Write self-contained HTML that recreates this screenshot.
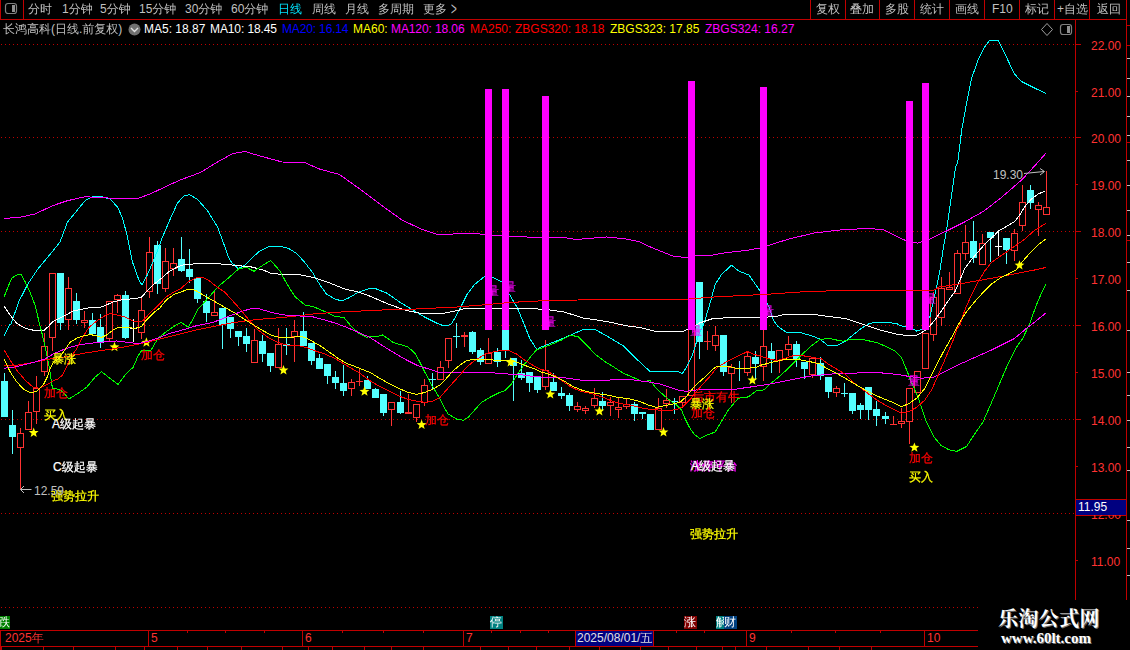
<!DOCTYPE html>
<html><head><meta charset="utf-8"><title>chart</title>
<style>
html,body{margin:0;padding:0;background:#000}
body{width:1130px;height:650px;overflow:hidden;position:relative;font-family:"Liberation Sans","WenQuanYi Zen Hei","Noto Sans CJK SC",sans-serif}
svg{position:absolute;left:0;top:0}
.t{position:absolute;white-space:nowrap;font-size:12px;line-height:13px}
.b{-webkit-text-stroke:0.25px currentColor}
</style></head><body>
<svg width="1130" height="650" viewBox="0 0 1130 650" shape-rendering="crispEdges">
<line x1="1" y1="44.5" x2="1075" y2="44.5" stroke="#c00000" stroke-dasharray="1 3"/>
<line x1="1" y1="137.5" x2="1075" y2="137.5" stroke="#c00000" stroke-dasharray="1 3"/>
<line x1="1" y1="231.5" x2="1075" y2="231.5" stroke="#c00000" stroke-dasharray="1 3"/>
<line x1="1" y1="325.5" x2="1075" y2="325.5" stroke="#c00000" stroke-dasharray="1 3"/>
<line x1="1" y1="419.5" x2="1075" y2="419.5" stroke="#c00000" stroke-dasharray="1 3"/>
<line x1="1" y1="513.5" x2="1075" y2="513.5" stroke="#c00000" stroke-dasharray="1 3"/>
<line x1="1" y1="607.5" x2="978" y2="607.5" stroke="#c00000" stroke-dasharray="1 3"/>
<rect x="4" y="373" width="1" height="8" fill="#54ffff"/>
<rect x="1" y="381" width="7" height="36" fill="#54ffff"/>
<rect x="12" y="410" width="1" height="15" fill="#54ffff"/>
<rect x="12" y="437" width="1" height="17" fill="#54ffff"/>
<rect x="9" y="425" width="7" height="12" fill="#54ffff"/>
<rect x="20" y="428" width="1" height="5" fill="#ff3232"/>
<rect x="20" y="448" width="1" height="41" fill="#ff3232"/>
<rect x="17.5" y="433.5" width="6" height="14" fill="#000" stroke="#ff3232"/>
<rect x="28" y="401" width="1" height="11" fill="#ff3232"/>
<rect x="25.5" y="412.5" width="6" height="17" fill="#000" stroke="#ff3232"/>
<rect x="36" y="376" width="1" height="12" fill="#ff3232"/>
<rect x="36" y="412" width="1" height="12" fill="#ff3232"/>
<rect x="33.5" y="388.5" width="6" height="23" fill="#000" stroke="#ff3232"/>
<rect x="44" y="333" width="1" height="13" fill="#ff3232"/>
<rect x="44" y="372" width="1" height="4" fill="#ff3232"/>
<rect x="41.5" y="346.5" width="6" height="25" fill="#000" stroke="#ff3232"/>
<rect x="52" y="338" width="1" height="13" fill="#ff3232"/>
<rect x="49.5" y="273.5" width="6" height="64" fill="#000" stroke="#ff3232"/>
<rect x="60" y="323" width="1" height="7" fill="#54ffff"/>
<rect x="57" y="273" width="7" height="50" fill="#54ffff"/>
<rect x="68" y="277" width="1" height="11" fill="#ff3232"/>
<rect x="68" y="320" width="1" height="10" fill="#ff3232"/>
<rect x="65.5" y="288.5" width="6" height="31" fill="#000" stroke="#ff3232"/>
<rect x="76" y="293" width="1" height="8" fill="#54ffff"/>
<rect x="76" y="320" width="1" height="4" fill="#54ffff"/>
<rect x="73" y="301" width="7" height="19" fill="#54ffff"/>
<rect x="84" y="311" width="1" height="9" fill="#ff3232"/>
<rect x="84" y="323" width="1" height="5" fill="#ff3232"/>
<rect x="81.5" y="320.5" width="6" height="2" fill="#000" stroke="#ff3232"/>
<rect x="92" y="313" width="1" height="7" fill="#54ffff"/>
<rect x="89" y="320" width="7" height="14" fill="#54ffff"/>
<rect x="100" y="314" width="1" height="13" fill="#54ffff"/>
<rect x="100" y="343" width="1" height="5" fill="#54ffff"/>
<rect x="97" y="327" width="7" height="16" fill="#54ffff"/>
<rect x="109" y="339" width="1" height="3" fill="#ff3232"/>
<rect x="106.5" y="301.5" width="6" height="37" fill="#000" stroke="#ff3232"/>
<rect x="117" y="294" width="1" height="1" fill="#ff3232"/>
<rect x="117" y="300" width="1" height="13" fill="#ff3232"/>
<rect x="114.5" y="295.5" width="6" height="4" fill="#000" stroke="#ff3232"/>
<rect x="125" y="291" width="1" height="4" fill="#54ffff"/>
<rect x="125" y="338" width="1" height="1" fill="#54ffff"/>
<rect x="122" y="295" width="7" height="43" fill="#54ffff"/>
<rect x="133" y="319" width="1" height="23" fill="#ffffff"/>
<rect x="130" y="328" width="7" height="1" fill="#ffffff"/>
<rect x="141" y="297" width="1" height="13" fill="#ff3232"/>
<rect x="141" y="333" width="1" height="6" fill="#ff3232"/>
<rect x="138.5" y="310.5" width="6" height="22" fill="#000" stroke="#ff3232"/>
<rect x="149" y="237" width="1" height="15" fill="#ff3232"/>
<rect x="149" y="292" width="1" height="6" fill="#ff3232"/>
<rect x="146.5" y="252.5" width="6" height="39" fill="#000" stroke="#ff3232"/>
<rect x="157" y="241" width="1" height="4" fill="#54ffff"/>
<rect x="157" y="284" width="1" height="10" fill="#54ffff"/>
<rect x="154" y="245" width="7" height="39" fill="#54ffff"/>
<rect x="165" y="248" width="1" height="13" fill="#ff3232"/>
<rect x="165" y="289" width="1" height="3" fill="#ff3232"/>
<rect x="162.5" y="261.5" width="6" height="27" fill="#000" stroke="#ff3232"/>
<rect x="173" y="248" width="1" height="15" fill="#ff3232"/>
<rect x="173" y="269" width="1" height="7" fill="#ff3232"/>
<rect x="170.5" y="263.5" width="6" height="5" fill="#000" stroke="#ff3232"/>
<rect x="181" y="237" width="1" height="22" fill="#54ffff"/>
<rect x="181" y="271" width="1" height="1" fill="#54ffff"/>
<rect x="178" y="259" width="7" height="12" fill="#54ffff"/>
<rect x="189" y="249" width="1" height="20" fill="#54ffff"/>
<rect x="189" y="277" width="1" height="6" fill="#54ffff"/>
<rect x="186" y="269" width="7" height="8" fill="#54ffff"/>
<rect x="197" y="299" width="1" height="4" fill="#54ffff"/>
<rect x="194" y="278" width="7" height="21" fill="#54ffff"/>
<rect x="206" y="294" width="1" height="7" fill="#54ffff"/>
<rect x="206" y="313" width="1" height="9" fill="#54ffff"/>
<rect x="203" y="301" width="7" height="12" fill="#54ffff"/>
<rect x="214" y="292" width="1" height="20" fill="#ff3232"/>
<rect x="211.5" y="312.5" width="6" height="3" fill="#000" stroke="#ff3232"/>
<rect x="222" y="325" width="1" height="24" fill="#54ffff"/>
<rect x="219" y="308" width="7" height="17" fill="#54ffff"/>
<rect x="230" y="329" width="1" height="9" fill="#54ffff"/>
<rect x="227" y="317" width="7" height="12" fill="#54ffff"/>
<rect x="238" y="337" width="1" height="9" fill="#54ffff"/>
<rect x="235" y="331" width="7" height="6" fill="#54ffff"/>
<rect x="246" y="328" width="1" height="8" fill="#54ffff"/>
<rect x="246" y="344" width="1" height="8" fill="#54ffff"/>
<rect x="243" y="336" width="7" height="8" fill="#54ffff"/>
<rect x="254" y="329" width="1" height="11" fill="#ff3232"/>
<rect x="251.5" y="340.5" width="6" height="22" fill="#000" stroke="#ff3232"/>
<rect x="262" y="335" width="1" height="6" fill="#54ffff"/>
<rect x="262" y="354" width="1" height="8" fill="#54ffff"/>
<rect x="259" y="341" width="7" height="13" fill="#54ffff"/>
<rect x="270" y="366" width="1" height="6" fill="#54ffff"/>
<rect x="267" y="353" width="7" height="13" fill="#54ffff"/>
<rect x="278" y="328" width="1" height="16" fill="#ff3232"/>
<rect x="275.5" y="344.5" width="6" height="23" fill="#000" stroke="#ff3232"/>
<rect x="286" y="328" width="1" height="16" fill="#54ffff"/>
<rect x="286" y="346" width="1" height="9" fill="#54ffff"/>
<rect x="283" y="344" width="7" height="2" fill="#54ffff"/>
<rect x="294" y="320" width="1" height="11" fill="#ff3232"/>
<rect x="294" y="337" width="1" height="25" fill="#ff3232"/>
<rect x="291.5" y="331.5" width="6" height="5" fill="#000" stroke="#ff3232"/>
<rect x="303" y="312" width="1" height="19" fill="#54ffff"/>
<rect x="300" y="331" width="7" height="15" fill="#54ffff"/>
<rect x="311" y="361" width="1" height="4" fill="#54ffff"/>
<rect x="308" y="343" width="7" height="18" fill="#54ffff"/>
<rect x="319" y="354" width="1" height="4" fill="#54ffff"/>
<rect x="316" y="358" width="7" height="11" fill="#54ffff"/>
<rect x="327" y="376" width="1" height="8" fill="#54ffff"/>
<rect x="324" y="364" width="7" height="12" fill="#54ffff"/>
<rect x="335" y="371" width="1" height="6" fill="#54ffff"/>
<rect x="335" y="383" width="1" height="6" fill="#54ffff"/>
<rect x="332" y="377" width="7" height="6" fill="#54ffff"/>
<rect x="343" y="365" width="1" height="18" fill="#54ffff"/>
<rect x="343" y="391" width="1" height="5" fill="#54ffff"/>
<rect x="340" y="383" width="7" height="8" fill="#54ffff"/>
<rect x="351" y="379" width="1" height="3" fill="#ff3232"/>
<rect x="351" y="389" width="1" height="7" fill="#ff3232"/>
<rect x="348.5" y="382.5" width="6" height="6" fill="#000" stroke="#ff3232"/>
<rect x="359" y="369" width="1" height="17" fill="#ff3232"/>
<rect x="356" y="381" width="7" height="1" fill="#ff3232"/>
<rect x="367" y="376" width="1" height="4" fill="#54ffff"/>
<rect x="364" y="380" width="7" height="9" fill="#54ffff"/>
<rect x="375" y="388" width="1" height="1" fill="#54ffff"/>
<rect x="372" y="389" width="7" height="9" fill="#54ffff"/>
<rect x="383" y="413" width="1" height="3" fill="#54ffff"/>
<rect x="380" y="394" width="7" height="19" fill="#54ffff"/>
<rect x="391" y="410" width="1" height="16" fill="#ff3232"/>
<rect x="388.5" y="402.5" width="6" height="7" fill="#000" stroke="#ff3232"/>
<rect x="400" y="391" width="1" height="11" fill="#54ffff"/>
<rect x="400" y="413" width="1" height="1" fill="#54ffff"/>
<rect x="397" y="402" width="7" height="11" fill="#54ffff"/>
<rect x="408" y="394" width="1" height="18" fill="#ff3232"/>
<rect x="405.5" y="412.5" width="6" height="1" fill="#000" stroke="#ff3232"/>
<rect x="416" y="418" width="1" height="4" fill="#ff3232"/>
<rect x="413.5" y="404.5" width="6" height="13" fill="#000" stroke="#ff3232"/>
<rect x="424" y="379" width="1" height="6" fill="#ff3232"/>
<rect x="424" y="403" width="1" height="3" fill="#ff3232"/>
<rect x="421.5" y="385.5" width="6" height="17" fill="#000" stroke="#ff3232"/>
<rect x="432" y="373" width="1" height="16" fill="#54ffff"/>
<rect x="429" y="379" width="7" height="1" fill="#54ffff"/>
<rect x="440" y="361" width="1" height="6" fill="#ff3232"/>
<rect x="437.5" y="367.5" width="6" height="12" fill="#000" stroke="#ff3232"/>
<rect x="448" y="361" width="1" height="7" fill="#ff3232"/>
<rect x="445.5" y="338.5" width="6" height="22" fill="#000" stroke="#ff3232"/>
<rect x="456" y="323" width="1" height="25" fill="#54ffff"/>
<rect x="453" y="336" width="7" height="1" fill="#54ffff"/>
<rect x="464" y="332" width="1" height="3" fill="#ff3232"/>
<rect x="464" y="337" width="1" height="10" fill="#ff3232"/>
<rect x="461.5" y="335.5" width="6" height="1" fill="#000" stroke="#ff3232"/>
<rect x="472" y="331" width="1" height="1" fill="#54ffff"/>
<rect x="472" y="352" width="1" height="2" fill="#54ffff"/>
<rect x="469" y="332" width="7" height="20" fill="#54ffff"/>
<rect x="480" y="348" width="1" height="2" fill="#54ffff"/>
<rect x="480" y="362" width="1" height="3" fill="#54ffff"/>
<rect x="477" y="350" width="7" height="12" fill="#54ffff"/>
<rect x="488" y="338" width="1" height="15" fill="#ff3232"/>
<rect x="485.5" y="353.5" width="6" height="10" fill="#000" stroke="#ff3232"/>
<rect x="497" y="348" width="1" height="4" fill="#54ffff"/>
<rect x="497" y="362" width="1" height="5" fill="#54ffff"/>
<rect x="494" y="352" width="7" height="10" fill="#54ffff"/>
<rect x="505" y="350" width="1" height="8" fill="#54ffff"/>
<rect x="502" y="330" width="7" height="20" fill="#54ffff"/>
<rect x="513" y="366" width="1" height="35" fill="#54ffff"/>
<rect x="510" y="358" width="7" height="8" fill="#54ffff"/>
<rect x="521" y="360" width="1" height="13" fill="#54ffff"/>
<rect x="521" y="378" width="1" height="2" fill="#54ffff"/>
<rect x="518" y="373" width="7" height="5" fill="#54ffff"/>
<rect x="529" y="383" width="1" height="9" fill="#54ffff"/>
<rect x="526" y="372" width="7" height="11" fill="#54ffff"/>
<rect x="537" y="390" width="1" height="3" fill="#54ffff"/>
<rect x="534" y="377" width="7" height="13" fill="#54ffff"/>
<rect x="545" y="340" width="1" height="30" fill="#ff3232"/>
<rect x="545" y="387" width="1" height="3" fill="#ff3232"/>
<rect x="542.5" y="370.5" width="6" height="16" fill="#000" stroke="#ff3232"/>
<rect x="553" y="373" width="1" height="9" fill="#54ffff"/>
<rect x="550" y="382" width="7" height="9" fill="#54ffff"/>
<rect x="561" y="387" width="1" height="6" fill="#54ffff"/>
<rect x="561" y="396" width="1" height="3" fill="#54ffff"/>
<rect x="558" y="393" width="7" height="3" fill="#54ffff"/>
<rect x="569" y="393" width="1" height="2" fill="#54ffff"/>
<rect x="569" y="406" width="1" height="5" fill="#54ffff"/>
<rect x="566" y="395" width="7" height="11" fill="#54ffff"/>
<rect x="577" y="402" width="1" height="4" fill="#ff3232"/>
<rect x="577" y="410" width="1" height="2" fill="#ff3232"/>
<rect x="574.5" y="406.5" width="6" height="3" fill="#000" stroke="#ff3232"/>
<rect x="585" y="406" width="1" height="2" fill="#ff3232"/>
<rect x="585" y="411" width="1" height="3" fill="#ff3232"/>
<rect x="582.5" y="408.5" width="6" height="2" fill="#000" stroke="#ff3232"/>
<rect x="594" y="388" width="1" height="10" fill="#ff3232"/>
<rect x="594" y="406" width="1" height="2" fill="#ff3232"/>
<rect x="591.5" y="398.5" width="6" height="7" fill="#000" stroke="#ff3232"/>
<rect x="602" y="392" width="1" height="9" fill="#54ffff"/>
<rect x="602" y="406" width="1" height="5" fill="#54ffff"/>
<rect x="599" y="401" width="7" height="5" fill="#54ffff"/>
<rect x="610" y="397" width="1" height="5" fill="#ff3232"/>
<rect x="610" y="406" width="1" height="10" fill="#ff3232"/>
<rect x="607.5" y="402.5" width="6" height="3" fill="#000" stroke="#ff3232"/>
<rect x="618" y="398" width="1" height="9" fill="#ff3232"/>
<rect x="618" y="410" width="1" height="8" fill="#ff3232"/>
<rect x="615.5" y="407.5" width="6" height="2" fill="#000" stroke="#ff3232"/>
<rect x="626" y="399" width="1" height="5" fill="#ff3232"/>
<rect x="626" y="407" width="1" height="2" fill="#ff3232"/>
<rect x="623.5" y="404.5" width="6" height="2" fill="#000" stroke="#ff3232"/>
<rect x="634" y="402" width="1" height="2" fill="#54ffff"/>
<rect x="634" y="414" width="1" height="7" fill="#54ffff"/>
<rect x="631" y="404" width="7" height="10" fill="#54ffff"/>
<rect x="642" y="414" width="1" height="5" fill="#54ffff"/>
<rect x="639" y="412" width="7" height="2" fill="#54ffff"/>
<rect x="647" y="414" width="7" height="16" fill="#54ffff"/>
<rect x="658" y="398" width="1" height="10" fill="#ff3232"/>
<rect x="655.5" y="408.5" width="6" height="21" fill="#000" stroke="#ff3232"/>
<rect x="666" y="389" width="1" height="11" fill="#ff3232"/>
<rect x="666" y="404" width="1" height="4" fill="#ff3232"/>
<rect x="663.5" y="400.5" width="6" height="3" fill="#000" stroke="#ff3232"/>
<rect x="674" y="398" width="1" height="16" fill="#54ffff"/>
<rect x="671" y="401" width="7" height="1" fill="#54ffff"/>
<rect x="682" y="403" width="1" height="5" fill="#ff3232"/>
<rect x="679.5" y="396.5" width="6" height="6" fill="#000" stroke="#ff3232"/>
<rect x="688.5" y="322.5" width="6" height="73" fill="#000" stroke="#ff3232"/>
<rect x="699" y="342" width="1" height="17" fill="#54ffff"/>
<rect x="696" y="282" width="7" height="60" fill="#54ffff"/>
<rect x="707" y="331" width="1" height="19" fill="#ff3232"/>
<rect x="704" y="341" width="7" height="1" fill="#ff3232"/>
<rect x="715" y="326" width="1" height="9" fill="#ff3232"/>
<rect x="715" y="346" width="1" height="5" fill="#ff3232"/>
<rect x="712.5" y="335.5" width="6" height="10" fill="#000" stroke="#ff3232"/>
<rect x="723" y="372" width="1" height="4" fill="#54ffff"/>
<rect x="720" y="335" width="7" height="37" fill="#54ffff"/>
<rect x="731" y="364" width="1" height="3" fill="#ff3232"/>
<rect x="731" y="374" width="1" height="29" fill="#ff3232"/>
<rect x="728.5" y="367.5" width="6" height="6" fill="#000" stroke="#ff3232"/>
<rect x="739" y="361" width="1" height="20" fill="#54ffff"/>
<rect x="736" y="368" width="7" height="1" fill="#54ffff"/>
<rect x="747" y="351" width="1" height="5" fill="#ff3232"/>
<rect x="747" y="373" width="1" height="3" fill="#ff3232"/>
<rect x="744.5" y="356.5" width="6" height="16" fill="#000" stroke="#ff3232"/>
<rect x="755" y="351" width="1" height="6" fill="#54ffff"/>
<rect x="755" y="364" width="1" height="16" fill="#54ffff"/>
<rect x="752" y="357" width="7" height="7" fill="#54ffff"/>
<rect x="763" y="330" width="1" height="16" fill="#ff3232"/>
<rect x="763" y="367" width="1" height="14" fill="#ff3232"/>
<rect x="760.5" y="346.5" width="6" height="20" fill="#000" stroke="#ff3232"/>
<rect x="771" y="343" width="1" height="8" fill="#54ffff"/>
<rect x="771" y="359" width="1" height="14" fill="#54ffff"/>
<rect x="768" y="351" width="7" height="8" fill="#54ffff"/>
<rect x="779" y="361" width="1" height="12" fill="#ff3232"/>
<rect x="776.5" y="350.5" width="6" height="10" fill="#000" stroke="#ff3232"/>
<rect x="788" y="336" width="1" height="8" fill="#ff3232"/>
<rect x="788" y="350" width="1" height="6" fill="#ff3232"/>
<rect x="785.5" y="344.5" width="6" height="5" fill="#000" stroke="#ff3232"/>
<rect x="796" y="341" width="1" height="3" fill="#54ffff"/>
<rect x="796" y="359" width="1" height="8" fill="#54ffff"/>
<rect x="793" y="344" width="7" height="15" fill="#54ffff"/>
<rect x="804" y="369" width="1" height="10" fill="#54ffff"/>
<rect x="801" y="362" width="7" height="7" fill="#54ffff"/>
<rect x="812" y="375" width="1" height="3" fill="#ff3232"/>
<rect x="809.5" y="358.5" width="6" height="16" fill="#000" stroke="#ff3232"/>
<rect x="820" y="357" width="1" height="6" fill="#54ffff"/>
<rect x="820" y="376" width="1" height="4" fill="#54ffff"/>
<rect x="817" y="363" width="7" height="13" fill="#54ffff"/>
<rect x="828" y="392" width="1" height="6" fill="#54ffff"/>
<rect x="825" y="377" width="7" height="15" fill="#54ffff"/>
<rect x="836" y="386" width="1" height="2" fill="#ff3232"/>
<rect x="836" y="393" width="1" height="4" fill="#ff3232"/>
<rect x="833.5" y="388.5" width="6" height="4" fill="#000" stroke="#ff3232"/>
<rect x="844" y="383" width="1" height="14" fill="#54ffff"/>
<rect x="841" y="393" width="7" height="1" fill="#54ffff"/>
<rect x="852" y="411" width="1" height="3" fill="#54ffff"/>
<rect x="849" y="393" width="7" height="18" fill="#54ffff"/>
<rect x="860" y="403" width="1" height="2" fill="#54ffff"/>
<rect x="860" y="410" width="1" height="9" fill="#54ffff"/>
<rect x="857" y="405" width="7" height="5" fill="#54ffff"/>
<rect x="868" y="410" width="1" height="10" fill="#54ffff"/>
<rect x="865" y="387" width="7" height="23" fill="#54ffff"/>
<rect x="876" y="401" width="1" height="8" fill="#54ffff"/>
<rect x="876" y="416" width="1" height="10" fill="#54ffff"/>
<rect x="873" y="409" width="7" height="7" fill="#54ffff"/>
<rect x="885" y="412" width="1" height="4" fill="#54ffff"/>
<rect x="885" y="419" width="1" height="5" fill="#54ffff"/>
<rect x="882" y="416" width="7" height="3" fill="#54ffff"/>
<rect x="893" y="416" width="1" height="9" fill="#ff3232"/>
<rect x="890" y="424" width="7" height="1" fill="#ff3232"/>
<rect x="901" y="408" width="1" height="13" fill="#ff3232"/>
<rect x="901" y="424" width="1" height="4" fill="#ff3232"/>
<rect x="898.5" y="421.5" width="6" height="2" fill="#000" stroke="#ff3232"/>
<rect x="909" y="422" width="1" height="22" fill="#ff3232"/>
<rect x="906.5" y="388.5" width="6" height="33" fill="#000" stroke="#ff3232"/>
<rect x="914.5" y="371.5" width="6" height="21" fill="#000" stroke="#ff3232"/>
<rect x="922.5" y="333.5" width="6" height="35" fill="#000" stroke="#ff3232"/>
<rect x="933" y="292" width="1" height="5" fill="#ff3232"/>
<rect x="933" y="335" width="1" height="6" fill="#ff3232"/>
<rect x="930.5" y="297.5" width="6" height="37" fill="#000" stroke="#ff3232"/>
<rect x="941" y="277" width="1" height="11" fill="#ff3232"/>
<rect x="941" y="318" width="1" height="8" fill="#ff3232"/>
<rect x="938.5" y="288.5" width="6" height="29" fill="#000" stroke="#ff3232"/>
<rect x="949" y="272" width="1" height="15" fill="#ff3232"/>
<rect x="946.5" y="287.5" width="6" height="2" fill="#000" stroke="#ff3232"/>
<rect x="957" y="250" width="1" height="3" fill="#ff3232"/>
<rect x="954.5" y="253.5" width="6" height="40" fill="#000" stroke="#ff3232"/>
<rect x="965" y="225" width="1" height="17" fill="#ff3232"/>
<rect x="965" y="254" width="1" height="6" fill="#ff3232"/>
<rect x="962.5" y="242.5" width="6" height="11" fill="#000" stroke="#ff3232"/>
<rect x="973" y="221" width="1" height="20" fill="#54ffff"/>
<rect x="973" y="258" width="1" height="5" fill="#54ffff"/>
<rect x="970" y="241" width="7" height="17" fill="#54ffff"/>
<rect x="982" y="234" width="1" height="9" fill="#ff3232"/>
<rect x="979.5" y="243.5" width="6" height="21" fill="#000" stroke="#ff3232"/>
<rect x="990" y="238" width="1" height="24" fill="#54ffff"/>
<rect x="987" y="232" width="7" height="6" fill="#54ffff"/>
<rect x="998" y="231" width="1" height="25" fill="#ffffff"/>
<rect x="995" y="246" width="7" height="1" fill="#ffffff"/>
<rect x="1006" y="250" width="1" height="14" fill="#54ffff"/>
<rect x="1003" y="238" width="7" height="12" fill="#54ffff"/>
<rect x="1014" y="229" width="1" height="4" fill="#ff3232"/>
<rect x="1014" y="251" width="1" height="10" fill="#ff3232"/>
<rect x="1011.5" y="233.5" width="6" height="17" fill="#000" stroke="#ff3232"/>
<rect x="1022" y="185" width="1" height="17" fill="#ff3232"/>
<rect x="1022" y="226" width="1" height="5" fill="#ff3232"/>
<rect x="1019.5" y="202.5" width="6" height="23" fill="#000" stroke="#ff3232"/>
<rect x="1030" y="185" width="1" height="5" fill="#54ffff"/>
<rect x="1030" y="203" width="1" height="6" fill="#54ffff"/>
<rect x="1027" y="190" width="7" height="13" fill="#54ffff"/>
<rect x="1038" y="202" width="1" height="3" fill="#ff3232"/>
<rect x="1038" y="210" width="1" height="26" fill="#ff3232"/>
<rect x="1035.5" y="205.5" width="6" height="4" fill="#000" stroke="#ff3232"/>
<rect x="1046" y="171" width="1" height="36" fill="#ff3232"/>
<rect x="1043.5" y="207.5" width="6" height="7" fill="#000" stroke="#ff3232"/>
<polygon points="33.7,427.5 35.0,430.9 38.6,431.1 35.8,433.4 36.8,436.9 33.7,434.9 30.6,436.9 31.6,433.4 28.8,431.1 32.4,430.9" fill="#ffff00" shape-rendering="auto"/>
<polygon points="114.5,341.8 115.8,345.2 119.4,345.4 116.6,347.7 117.6,351.2 114.5,349.2 111.4,351.2 112.4,347.7 109.6,345.4 113.2,345.2" fill="#ffff00" shape-rendering="auto"/>
<polygon points="146.4,337.3 147.7,340.7 151.3,340.9 148.5,343.2 149.5,346.7 146.4,344.7 143.3,346.7 144.3,343.2 141.5,340.9 145.1,340.7" fill="#ffff00" shape-rendering="auto"/>
<polygon points="283.5,365.0 284.8,368.4 288.4,368.6 285.6,370.9 286.6,374.4 283.5,372.4 280.4,374.4 281.4,370.9 278.6,368.6 282.2,368.4" fill="#ffff00" shape-rendering="auto"/>
<polygon points="364.5,386.3 365.8,389.7 369.4,389.9 366.6,392.2 367.6,395.7 364.5,393.7 361.4,395.7 362.4,392.2 359.6,389.9 363.2,389.7" fill="#ffff00" shape-rendering="auto"/>
<polygon points="421.6,419.6 422.9,423.0 426.5,423.2 423.7,425.5 424.7,429.0 421.6,427.0 418.5,429.0 419.5,425.5 416.7,423.2 420.3,423.0" fill="#ffff00" shape-rendering="auto"/>
<polygon points="510.6,357.2 511.9,360.6 515.5,360.8 512.7,363.1 513.7,366.6 510.6,364.6 507.5,366.6 508.5,363.1 505.7,360.8 509.3,360.6" fill="#ffff00" shape-rendering="auto"/>
<polygon points="550.3,389.2 551.6,392.6 555.2,392.8 552.4,395.1 553.4,398.6 550.3,396.6 547.2,398.6 548.2,395.1 545.4,392.8 549.0,392.6" fill="#ffff00" shape-rendering="auto"/>
<polygon points="599.4,406.0 600.7,409.4 604.3,409.6 601.5,411.9 602.5,415.4 599.4,413.4 596.3,415.4 597.3,411.9 594.5,409.6 598.1,409.4" fill="#ffff00" shape-rendering="auto"/>
<polygon points="663.5,427.0 664.8,430.4 668.4,430.6 665.6,432.9 666.6,436.4 663.5,434.4 660.4,436.4 661.4,432.9 658.6,430.6 662.2,430.4" fill="#ffff00" shape-rendering="auto"/>
<polygon points="752.4,375.0 753.7,378.4 757.3,378.6 754.5,380.9 755.5,384.4 752.4,382.4 749.3,384.4 750.3,380.9 747.5,378.6 751.1,378.4" fill="#ffff00" shape-rendering="auto"/>
<polygon points="914.4,442.4 915.7,445.8 919.3,446.0 916.5,448.3 917.5,451.8 914.4,449.8 911.3,451.8 912.3,448.3 909.5,446.0 913.1,445.8" fill="#ffff00" shape-rendering="auto"/>
<polygon points="1019.5,260.2 1020.8,263.6 1024.4,263.8 1021.6,266.1 1022.6,269.6 1019.5,267.6 1016.4,269.6 1017.4,266.1 1014.6,263.8 1018.2,263.6" fill="#ffff00" shape-rendering="auto"/>
<polyline points="4.0,336.0 10.0,324.0 11.0,324.0 18.7,302.0 27.5,284.5 37.5,269.5 50.0,254.5 60.0,242.0 67.5,222.0 75.0,213.0 85.0,200.7 93.7,196.2 102.5,197.0 110.0,199.0 117.5,207.0 122.5,218.0 127.5,237.0 132.5,262.0 138.7,279.5 142.0,285.2 147.5,274.5 155.0,257.0 162.5,237.0 170.0,219.5 177.5,203.0 183.7,196.2 189.5,194.5 197.5,199.5 207.5,210.7 217.5,227.0 223.6,243.3 228.2,256.6 231.6,262.4 238.2,268.6 245.0,265.3 251.5,258.3 260.0,250.8 270.0,246.1 280.0,246.1 288.2,248.3 296.5,253.3 304.8,262.4 313.0,273.3 320.0,285.0 326.4,294.0 334.7,299.0 342.2,301.0 349.7,297.4 358.0,292.4 368.0,289.0 374.5,288.2 387.0,293.2 399.5,302.0 412.0,309.5 424.5,317.0 437.0,323.2 441.5,325.0 449.0,325.0 452.0,323.2 459.5,309.5 467.0,294.5 474.5,284.5 484.5,276.5 493.2,277.5 502.0,282.0 509.5,294.5 517.0,307.0 523.2,322.0 526.4,330.0 529.7,338.3 533.9,345.0 537.2,350.0 540.0,347.5 561.6,339.0 583.2,329.5 595.0,329.5 606.5,335.8 623.2,345.8 633.2,355.8 641.5,363.6 649.8,371.2 664.8,371.6 678.0,371.6 682.2,373.6 686.4,367.4 691.4,357.4 695.6,345.0 698.0,336.6 704.0,323.2 709.0,307.0 715.2,284.5 721.5,274.5 731.5,265.2 739.0,271.2 749.0,275.0 759.0,289.5 764.0,297.0 769.0,307.0 773.2,320.0 778.2,326.6 786.6,332.5 799.9,332.5 811.5,335.8 819.8,339.0 828.2,345.8 836.5,345.8 844.8,341.6 853.1,335.0 861.4,328.3 869.8,323.3 878.0,322.0 896.4,323.3 900.0,325.7 910.0,327.3 916.6,331.0 923.3,329.0 930.0,316.5 933.3,301.5 936.6,286.6 940.0,270.0 943.3,248.3 946.6,229.9 951.6,195.0 955.7,166.6 957.8,162.0 961.6,130.7 966.6,103.0 971.7,78.0 978.0,60.3 984.2,47.7 989.8,40.2 998.0,40.2 1006.8,57.8 1014.4,74.1 1022.0,81.7 1034.5,88.0 1045.8,93.5" fill="none" stroke="#00ffff" stroke-width="1"/>
<polyline points="4.2,306.5 10.0,314.9 16.6,323.2 25.0,328.2 33.3,330.2 44.1,330.3 48.3,326.5 53.2,321.2 61.6,317.4 73.2,311.0 88.2,307.9 102.3,306.9 113.1,301.9 123.1,299.6 134.8,298.6 141.4,297.4 146.4,291.6 153.1,284.9 161.4,278.3 168.0,272.4 176.4,267.4 183.0,264.9 195.0,263.8 218.3,263.8 235.0,265.3 251.5,267.0 263.2,270.0 270.7,273.3 281.5,274.4 299.0,274.6 313.0,277.4 329.7,283.0 344.7,289.0 356.4,291.6 368.0,295.4 374.5,298.2 389.5,304.5 407.0,310.7 422.0,313.7 442.0,313.7 457.0,310.7 464.5,308.7 484.5,308.7 532.0,308.7 547.0,309.5 564.0,312.0 584.0,318.2 596.6,320.0 611.5,322.5 626.5,325.8 639.8,327.5 654.8,331.3 683.0,331.3 689.8,328.3 696.4,325.0 699.0,323.2 714.0,318.2 739.0,317.7 759.0,317.5 776.5,316.5 784.0,314.5 814.0,314.5 829.0,316.5 846.0,318.7 849.8,320.0 864.8,325.0 879.7,330.0 896.4,334.1 908.0,335.8 916.6,335.2 926.6,329.8 935.0,319.8 943.3,308.2 950.0,298.2 955.0,291.6 960.0,279.9 964.9,268.3 969.9,261.6 978.2,251.6 986.5,242.5 994.8,235.0 998.2,231.0 1006.5,226.5 1014.8,221.5 1019.8,214.9 1024.8,206.6 1031.4,199.0 1038.1,194.0 1045.6,190.8" fill="none" stroke="#ffffff" stroke-width="1"/>
<rect x="485" y="89" width="7" height="241" fill="#ff00ff"/>
<rect x="502" y="89" width="7" height="241" fill="#ff00ff"/>
<rect x="542" y="96" width="7" height="234" fill="#ff00ff"/>
<rect x="688" y="81" width="7" height="249" fill="#ff00ff"/>
<rect x="760" y="87" width="7" height="243" fill="#ff00ff"/>
<rect x="906" y="101" width="7" height="229" fill="#ff00ff"/>
<rect x="922" y="83" width="7" height="247" fill="#ff00ff"/>
<polyline points="4.5,218.5 21.0,217.0 35.0,214.0 52.5,205.7 67.5,200.7 85.0,196.7 100.0,197.7 120.0,198.5 137.5,198.5 150.0,194.0 165.0,187.0 180.0,180.0 200.0,172.7 217.5,162.0 232.5,153.7 245.0,151.5 260.0,156.0 275.0,160.0 282.0,162.0 304.5,162.5 319.5,169.0 339.5,174.5 357.0,187.0 382.0,205.7 402.0,220.0 422.0,229.5 439.5,235.0 457.0,233.7 477.0,233.5 485.0,234.7 527.0,237.0 542.0,237.0 564.0,237.5 576.5,239.5 606.5,237.0 624.0,238.7 639.0,241.5 651.5,247.5 674.0,256.5 688.0,257.5 695.5,255.7 709.0,255.7 724.0,253.0 749.0,250.0 760.0,248.0 767.5,245.7 789.0,239.0 814.0,233.0 846.0,229.3 871.0,228.6 883.7,229.9 896.0,236.0 906.0,240.7 917.6,243.2 929.0,239.4 946.5,231.0 964.0,222.3 984.0,211.0 1002.0,197.0 1022.0,179.6 1037.0,163.3 1045.8,153.3" fill="none" stroke="#ff00ff" stroke-width="1"/>
<polyline points="4.2,296.5 11.6,278.2 16.6,275.0 20.8,274.0 25.0,281.6 29.1,290.0 35.0,305.0 38.6,320.0 42.4,335.0 46.6,353.3 50.0,371.6 52.4,388.2 57.4,389.0 62.4,391.5 69.0,399.0 78.2,393.2 86.5,387.4 94.8,377.4 101.5,371.6 109.8,378.2 118.1,384.4 126.5,373.2 133.1,367.4 138.1,355.8 141.4,350.8 150.6,350.8 158.0,338.3 166.4,331.6 174.7,325.8 181.4,322.5 188.3,327.3 192.5,319.8 197.5,309.9 205.0,301.5 218.3,286.6 230.0,276.6 239.0,268.6 246.5,267.4 254.0,271.3 263.2,265.0 270.7,260.4 279.8,270.8 286.5,283.2 294.8,296.5 304.8,304.9 313.0,306.5 324.7,311.5 334.7,316.5 343.9,317.4 351.4,326.5 359.7,334.0 366.6,337.1 376.6,336.6 382.5,335.0 387.5,338.3 393.3,342.5 401.6,345.0 408.2,347.1 415.0,353.3 420.0,362.4 425.0,372.4 431.5,384.9 438.2,395.7 443.2,405.7 448.2,414.0 456.5,419.0 463.2,420.3 468.2,417.3 474.8,409.9 481.5,402.4 489.8,397.4 498.0,393.2 504.8,390.7 511.4,384.0 518.0,373.2 524.7,364.0 531.4,355.8 536.4,350.0 543.0,347.5 550.0,345.0 561.6,340.0 570.0,335.3 578.3,336.6 586.6,345.0 595.0,354.0 604.9,361.6 613.2,366.6 623.2,373.2 633.2,377.4 643.2,381.9 649.8,380.2 654.8,386.6 661.5,393.2 668.0,399.0 676.4,404.9 681.4,409.9 684.8,418.2 689.8,428.0 694.0,434.0 699.7,438.5 706.5,435.2 715.2,432.0 721.5,421.5 728.3,409.9 738.3,398.2 748.3,396.9 756.6,390.7 764.0,389.9 770.0,384.0 778.2,377.4 786.6,370.0 794.9,361.6 803.2,353.3 811.5,345.8 819.8,339.6 828.2,338.3 836.5,340.0 843.1,341.3 851.4,339.1 863.1,339.6 876.4,342.5 886.4,346.6 894.7,350.8 901.4,357.4 906.3,369.2 911.3,381.8 918.9,399.4 926.4,422.0 934.0,437.1 941.5,445.9 949.0,449.7 956.6,451.4 966.6,446.4 974.2,434.6 983.0,422.0 991.8,401.9 999.3,384.3 1006.8,366.7 1016.9,346.6 1023.0,338.0 1029.8,323.2 1036.4,304.9 1041.4,293.2 1045.9,284.0" fill="none" stroke="#00ff00" stroke-width="1"/>
<polyline points="4.2,365.8 16.6,365.3 33.3,362.4 50.0,359.0 66.6,356.6 83.2,353.3 99.8,350.8 116.5,348.3 133.1,345.3 149.8,341.6 166.4,337.5 180.0,334.0 196.6,329.8 213.3,326.5 230.0,323.2 246.5,320.7 263.2,319.0 279.8,317.7 296.5,316.0 313.0,314.0 332.0,312.5 357.0,311.2 382.0,310.0 407.0,309.5 432.0,308.2 457.0,307.0 482.0,305.0 507.0,302.7 532.0,301.2 564.0,300.2 614.0,299.5 664.0,299.5 689.0,299.0 714.0,297.0 739.0,295.7 764.0,294.5 789.0,292.7 814.0,291.2 846.0,290.7 934.0,290.2 939.0,287.0 959.0,284.0 984.0,279.6 1009.4,275.0 1034.5,270.0 1045.8,267.5" fill="none" stroke="#ff0000" stroke-width="1"/>
<polyline points="4.2,368.3 16.6,366.6 33.3,362.4 45.0,359.0 53.2,354.0 66.6,348.3 79.9,344.6 93.2,343.0 106.5,341.6 116.5,341.0 129.8,342.5 138.1,343.8 149.8,340.8 159.7,337.5 169.7,333.3 180.0,330.7 196.6,325.7 213.3,322.3 230.0,315.7 241.6,311.5 251.5,308.5 260.0,309.0 271.5,312.4 283.2,314.9 299.8,316.0 313.0,316.9 324.7,319.9 336.4,323.5 346.4,327.3 356.4,331.5 370.0,337.5 381.6,345.0 393.3,352.4 406.6,360.0 418.2,365.8 430.0,369.4 438.2,372.0 453.2,372.7 476.5,372.4 493.0,372.7 498.0,373.6 518.0,374.4 534.7,376.6 548.0,377.4 565.0,377.9 581.6,380.2 606.5,380.2 623.2,379.4 633.2,379.9 648.0,381.9 659.8,384.0 669.8,387.4 679.8,390.7 686.4,391.2 696.4,389.9 720.0,389.0 736.6,389.0 753.3,386.6 770.0,384.0 786.6,380.7 803.2,377.4 813.2,375.7 836.5,373.6 853.0,373.2 869.8,372.4 886.4,373.2 900.0,374.9 910.0,376.6 921.6,378.2 933.3,377.4 941.6,373.2 958.2,364.9 974.9,357.4 991.5,350.0 1014.8,338.3 1026.5,328.3 1036.4,320.7 1045.6,313.2" fill="none" stroke="#ff00ff" stroke-width="1"/>
<polyline points="4.2,350.0 10.0,360.0 16.6,370.0 25.0,380.0 33.3,387.4 40.0,388.2 48.3,384.0 53.2,380.7 58.2,379.0 62.4,375.0 66.6,366.6 71.5,355.8 76.5,349.0 81.5,339.0 86.5,331.0 89.9,326.5 98.2,319.9 106.5,314.9 110.6,313.2 116.5,314.9 124.8,316.9 133.1,321.2 138.1,321.8 143.1,320.7 149.8,313.2 158.0,305.7 166.4,296.6 174.7,291.6 181.4,288.2 188.3,281.6 196.6,277.8 203.3,277.8 208.3,280.0 216.6,286.6 225.0,292.4 233.2,301.5 241.6,310.7 250.0,321.5 258.2,330.0 268.2,337.5 278.2,342.5 286.5,345.0 296.5,345.3 306.5,347.5 314.8,350.8 324.7,354.0 334.7,358.3 343.0,363.3 351.4,368.3 359.7,373.2 370.0,380.7 380.0,386.6 390.0,391.5 400.0,396.5 410.0,399.9 418.2,401.5 426.5,402.4 433.2,401.0 440.0,397.4 446.5,390.0 453.2,382.4 460.0,375.0 466.5,367.4 473.2,361.6 479.8,357.4 486.5,353.3 494.8,351.6 503.0,350.0 509.8,350.8 516.4,354.0 523.0,359.0 529.7,363.3 536.4,367.4 540.0,369.0 546.6,370.7 555.0,375.7 563.3,381.6 571.6,387.4 581.6,391.5 593.2,394.0 603.2,397.4 613.2,401.5 623.2,404.0 633.2,405.7 643.2,408.2 653.1,409.9 666.5,410.2 676.4,409.9 683.0,406.5 689.8,399.9 696.4,391.5 703.0,384.0 709.7,376.6 716.4,368.3 720.0,365.8 728.3,360.8 738.3,355.8 747.5,351.6 753.3,354.0 761.6,356.6 770.0,359.0 776.6,360.8 784.9,358.3 793.2,355.8 803.2,355.8 813.2,357.4 821.5,359.0 828.2,364.0 836.5,369.0 844.8,374.0 853.1,382.4 861.4,388.2 869.8,394.9 878.0,400.7 886.4,405.7 894.7,409.9 901.4,413.2 908.3,411.8 916.6,407.4 925.0,399.9 931.6,389.9 938.3,374.9 943.3,363.3 948.3,351.6 953.2,340.0 957.4,328.3 959.9,324.8 964.9,309.9 971.5,294.9 978.2,281.6 984.9,270.8 991.5,262.4 999.8,256.6 1008.2,250.8 1016.5,245.0 1024.8,239.2 1033.0,231.5 1046.0,223.2" fill="none" stroke="#ff0000" stroke-width="1"/>
<polyline points="4.2,359.0 10.0,371.6 16.6,381.6 23.3,389.0 30.0,392.7 36.6,391.5 43.3,384.9 47.4,376.6 50.0,369.0 53.2,362.4 58.2,359.0 64.9,350.0 69.9,342.5 76.5,338.3 83.2,335.8 89.9,334.6 95.7,335.5 101.5,337.5 106.5,335.0 113.1,330.0 118.1,327.5 126.5,327.5 134.8,328.3 141.4,326.7 146.4,319.9 153.1,313.2 159.7,308.2 166.4,299.9 174.7,294.0 181.4,291.9 188.3,289.0 195.0,290.2 201.6,294.0 213.3,300.7 225.0,307.4 235.0,313.2 246.5,320.7 255.0,325.8 263.2,330.8 271.5,335.3 280.0,337.5 288.2,338.0 296.5,336.6 304.0,337.1 311.5,340.8 321.4,346.6 329.7,352.4 338.0,358.3 346.4,363.3 356.4,367.0 360.0,368.6 370.0,372.4 378.3,377.4 388.3,383.2 398.3,388.2 408.2,392.4 416.6,394.4 425.0,392.4 433.2,389.0 440.0,384.9 446.5,378.2 453.2,370.7 460.0,365.0 466.5,360.8 473.2,359.4 483.2,359.4 493.0,360.0 503.0,360.0 513.0,360.8 521.4,364.0 528.0,366.6 534.7,369.0 540.0,371.6 548.3,374.0 556.6,377.4 565.0,381.6 573.3,386.6 583.2,390.7 595.0,393.2 606.5,394.9 618.2,397.4 629.8,399.0 639.8,401.5 648.0,404.9 656.5,407.4 664.8,405.7 673.0,404.0 679.8,402.4 686.4,396.5 693.0,388.2 699.7,381.6 706.4,375.8 713.0,369.0 716.4,366.6 728.0,366.3 736.6,368.3 755.0,367.9 761.6,365.0 775.0,361.6 786.6,359.0 798.2,359.6 809.8,361.6 819.8,364.0 826.5,368.3 836.5,373.2 846.5,379.0 856.4,384.9 866.4,390.7 876.4,395.7 886.4,399.9 894.7,403.2 901.4,406.5 908.3,404.0 916.6,398.2 925.0,388.2 931.6,374.9 938.3,361.6 944.9,349.0 951.6,337.5 958.2,324.8 966.6,311.5 974.9,301.5 983.2,292.4 991.5,284.0 999.8,278.3 1008.2,274.1 1016.5,269.9 1023.0,260.8 1029.8,253.3 1038.0,245.0 1045.6,239.2" fill="none" stroke="#ffff00" stroke-width="1"/>
<rect x="0" y="19" width="1127" height="1" fill="#c00000"/>
<rect x="0" y="0" width="1" height="20" fill="#c00000"/>
<rect x="23" y="0" width="1" height="20" fill="#c00000"/>
<rect x="810" y="0" width="1" height="20" fill="#c00000"/>
<rect x="845" y="0" width="1" height="20" fill="#c00000"/>
<rect x="879" y="0" width="1" height="20" fill="#c00000"/>
<rect x="914" y="0" width="1" height="20" fill="#c00000"/>
<rect x="949" y="0" width="1" height="20" fill="#c00000"/>
<rect x="984" y="0" width="1" height="20" fill="#c00000"/>
<rect x="1019" y="0" width="1" height="20" fill="#c00000"/>
<rect x="1054" y="0" width="1" height="20" fill="#c00000"/>
<rect x="1089" y="0" width="1" height="20" fill="#c00000"/>
<rect x="1126" y="0" width="1" height="600" fill="#c00000"/>
<rect x="1075" y="19" width="1" height="581" fill="#c00000"/>
<rect x="1076" y="560" width="2" height="1" fill="#c00000"/>
<rect x="1076" y="466" width="2" height="1" fill="#c00000"/>
<rect x="1076" y="419" width="5" height="1" fill="#c00000"/>
<rect x="1076" y="372" width="2" height="1" fill="#c00000"/>
<rect x="1076" y="325" width="5" height="1" fill="#c00000"/>
<rect x="1076" y="278" width="2" height="1" fill="#c00000"/>
<rect x="1076" y="231" width="5" height="1" fill="#c00000"/>
<rect x="1076" y="184" width="2" height="1" fill="#c00000"/>
<rect x="1076" y="137" width="5" height="1" fill="#c00000"/>
<rect x="1076" y="91" width="2" height="1" fill="#c00000"/>
<rect x="1076" y="44" width="5" height="1" fill="#c00000"/>
<rect x="0" y="630" width="978" height="1" fill="#c00000"/>
<rect x="0" y="646" width="978" height="1" fill="#c00000"/>
<rect x="0" y="630" width="1" height="20" fill="#c00000"/>
<rect x="148" y="630" width="1" height="16" fill="#c00000"/>
<rect x="302" y="630" width="1" height="16" fill="#c00000"/>
<rect x="463" y="630" width="1" height="16" fill="#c00000"/>
<rect x="746" y="630" width="1" height="16" fill="#c00000"/>
<rect x="924" y="630" width="1" height="16" fill="#c00000"/>
<rect x="187" y="630" width="1" height="3" fill="#c00000"/>
<rect x="225" y="630" width="1" height="3" fill="#c00000"/>
<rect x="264" y="630" width="1" height="3" fill="#c00000"/>
<rect x="342" y="630" width="1" height="3" fill="#c00000"/>
<rect x="383" y="630" width="1" height="3" fill="#c00000"/>
<rect x="423" y="630" width="1" height="3" fill="#c00000"/>
<rect x="491" y="630" width="1" height="3" fill="#c00000"/>
<rect x="520" y="630" width="1" height="3" fill="#c00000"/>
<rect x="548" y="630" width="1" height="3" fill="#c00000"/>
<rect x="676" y="630" width="1" height="3" fill="#c00000"/>
<rect x="704" y="630" width="1" height="3" fill="#c00000"/>
<rect x="791" y="630" width="1" height="3" fill="#c00000"/>
<rect x="835" y="630" width="1" height="3" fill="#c00000"/>
<rect x="880" y="630" width="1" height="3" fill="#c00000"/>
<rect x="1" y="646" width="1" height="4" fill="#c00000"/>
<rect x="43" y="646" width="1" height="4" fill="#c00000"/>
<rect x="73" y="646" width="1" height="4" fill="#c00000"/>
<rect x="115" y="646" width="1" height="4" fill="#c00000"/>
<rect x="144" y="646" width="1" height="4" fill="#c00000"/>
<rect x="177" y="646" width="1" height="4" fill="#c00000"/>
<rect x="207" y="646" width="1" height="4" fill="#c00000"/>
<rect x="241" y="646" width="1" height="4" fill="#c00000"/>
<rect x="282" y="646" width="1" height="4" fill="#c00000"/>
<rect x="308" y="646" width="1" height="4" fill="#c00000"/>
<rect x="332" y="646" width="1" height="4" fill="#c00000"/>
<rect x="364" y="646" width="1" height="4" fill="#c00000"/>
<rect x="391" y="646" width="1" height="4" fill="#c00000"/>
<rect x="423" y="646" width="1" height="4" fill="#c00000"/>
<rect x="480" y="646" width="1" height="4" fill="#c00000"/>
<rect x="508" y="646" width="1" height="4" fill="#c00000"/>
<rect x="536" y="646" width="1" height="4" fill="#c00000"/>
<rect x="569" y="646" width="1" height="4" fill="#c00000"/>
<rect x="599" y="646" width="1" height="4" fill="#c00000"/>
<rect x="640" y="646" width="1" height="4" fill="#c00000"/>
<rect x="668" y="646" width="1" height="4" fill="#c00000"/>
<rect x="696" y="646" width="1" height="4" fill="#c00000"/>
<rect x="722" y="646" width="1" height="4" fill="#c00000"/>
<rect x="735" y="646" width="1" height="4" fill="#c00000"/>
<rect x="766" y="646" width="1" height="4" fill="#c00000"/>
<rect x="808" y="646" width="1" height="4" fill="#c00000"/>
<rect x="839" y="646" width="1" height="4" fill="#c00000"/>
<rect x="871" y="646" width="1" height="4" fill="#c00000"/>
<rect x="1127" y="45" width="3" height="1" fill="#c00000"/>
<rect x="1127" y="25" width="3" height="1" fill="#c00000"/>
<rect x="1127" y="142" width="3" height="1" fill="#c00000"/>
<rect x="1127" y="58" width="3" height="1" fill="#c0c0c0"/>
<rect x="1127" y="78" width="3" height="1" fill="#c0c0c0"/>
<rect x="1127" y="96" width="3" height="1" fill="#c0c0c0"/>
<rect x="1127" y="116" width="3" height="1" fill="#c0c0c0"/>
<rect x="1127" y="135" width="3" height="1" fill="#c0c0c0"/>
<rect x="1127" y="160" width="3" height="1" fill="#c0c0c0"/>
<rect x="1127" y="185" width="3" height="1" fill="#c0c0c0"/>
<rect x="1127" y="210" width="3" height="1" fill="#c0c0c0"/>
<rect x="1127" y="235" width="3" height="1" fill="#c0c0c0"/>
<rect x="1127" y="262" width="3" height="1" fill="#c0c0c0"/>
<rect x="1127" y="290" width="3" height="1" fill="#c0c0c0"/>
<rect x="1127" y="330" width="3" height="1" fill="#c0c0c0"/>
<rect x="1127" y="372" width="3" height="1" fill="#c0c0c0"/>
<rect x="1127" y="395" width="3" height="1" fill="#c0c0c0"/>
<rect x="1127" y="420" width="3" height="1" fill="#c0c0c0"/>
<rect x="1127" y="447" width="3" height="1" fill="#c0c0c0"/>
<rect x="1127" y="470" width="3" height="1" fill="#c0c0c0"/>
<rect x="1127" y="520" width="3" height="1" fill="#c0c0c0"/>
<rect x="1127" y="548" width="3" height="1" fill="#c0c0c0"/>
<rect x="1127" y="575" width="3" height="1" fill="#c0c0c0"/>
<rect x="1127" y="600" width="3" height="1" fill="#c0c0c0"/>
<rect x="1127" y="240" width="3" height="1" fill="#c00000"/>
<rect x="576" y="631" width="77" height="15" fill="#000080"/>
<rect x="575" y="630" width="1" height="16" fill="#c00000"/>
<rect x="653" y="630" width="1" height="16" fill="#c00000"/>
<rect x="1076" y="500" width="50" height="15" fill="#000080"/>
<rect x="1076" y="499" width="50" height="1" fill="#c00000"/>
<rect x="1076" y="515" width="50" height="1" fill="#c00000"/>
<rect x="5.5" y="3.5" width="11" height="10" rx="2.5" fill="none" stroke="#808080" stroke-width="1.2" shape-rendering="auto"/>
<rect x="12" y="5" width="3" height="7" fill="#909090"/>
<rect x="1060.5" y="24.5" width="11" height="10" rx="2.5" fill="none" stroke="#808080" stroke-width="1.2" shape-rendering="auto"/>
<rect x="1067" y="26" width="3" height="7" fill="#909090"/>
<path d="M1047 23.5 L1052.5 29.5 L1047 35.5 L1041.5 29.5 Z" fill="none" stroke="#a0a0a0" stroke-width="1" shape-rendering="auto"/>
<circle cx="134.5" cy="29.5" r="6" fill="#707070" shape-rendering="auto"/>
<path d="M131 28 L134.5 31.5 L138 28" fill="none" stroke="#e0e0e0" stroke-width="1.4" shape-rendering="auto"/>
<path d="M1024 173.5 L1044 171.5 M1040 168.5 L1044.5 171.5 L1040 175" fill="none" stroke="#c0c0c0" stroke-width="1" shape-rendering="auto"/>
<path d="M20.5 489.5 L31.5 489.5 M24 486 L20.5 489.5 L24 493" fill="none" stroke="#c0c0c0" stroke-width="1" shape-rendering="auto"/>
</svg>
<div class="t" style="left:28px;top:3px;color:#c0c0c0;">分时</div>
<div class="t" style="left:62px;top:3px;color:#c0c0c0;">1分钟</div>
<div class="t" style="left:100px;top:3px;color:#c0c0c0;">5分钟</div>
<div class="t" style="left:139px;top:3px;color:#c0c0c0;">15分钟</div>
<div class="t" style="left:185px;top:3px;color:#c0c0c0;">30分钟</div>
<div class="t" style="left:231px;top:3px;color:#c0c0c0;">60分钟</div>
<div class="t" style="left:278px;top:3px;color:#00e5ff;">日线</div>
<div class="t" style="left:312px;top:3px;color:#c0c0c0;">周线</div>
<div class="t" style="left:345px;top:3px;color:#c0c0c0;">月线</div>
<div class="t" style="left:378px;top:3px;color:#c0c0c0;">多周期</div>
<div class="t" style="left:423px;top:3px;color:#c0c0c0;">更多</div>
<div class="t" style="left:451px;top:2px;color:#c0c0c0;font-size:14px;line-height:14px;transform:scale(.7,1.25);transform-origin:left center">&gt;</div>
<div class="t" style="left:816px;top:3px;color:#c0c0c0;">复权</div>
<div class="t" style="left:850px;top:3px;color:#c0c0c0;">叠加</div>
<div class="t" style="left:885px;top:3px;color:#c0c0c0;">多股</div>
<div class="t" style="left:920px;top:3px;color:#c0c0c0;">统计</div>
<div class="t" style="left:955px;top:3px;color:#c0c0c0;">画线</div>
<div class="t" style="left:992px;top:3px;color:#c0c0c0;">F10</div>
<div class="t" style="left:1025px;top:3px;color:#c0c0c0;">标记</div>
<div class="t" style="left:1057px;top:3px;color:#c0c0c0;">+自选</div>
<div class="t" style="left:1097px;top:3px;color:#c0c0c0;">返回</div>
<div class="t" style="left:3px;top:23px;color:#c0c0c0;">长鸿高科(日线.前复权)</div>
<div class="t" style="left:144px;top:23px;color:#ffffff;">MA5: 18.87</div>
<div class="t" style="left:210px;top:23px;color:#ffffff;letter-spacing:-0.1px">MA10: 18.45</div>
<div class="t" style="left:282px;top:23px;color:#0000ff;letter-spacing:-0.15px">MA20: 16.14</div>
<div class="t" style="left:353px;top:23px;color:#ffff00;">MA60:</div>
<div class="t" style="left:391px;top:23px;color:#ff00ff;letter-spacing:-0.1px">MA120: 18.06</div>
<div class="t" style="left:470px;top:23px;color:#ff0000;">MA250:</div>
<div class="t" style="left:515px;top:23px;color:#ff0000;">ZBGS320: 18.18</div>
<div class="t" style="left:610px;top:23px;color:#ffff00;">ZBGS323: 17.85</div>
<div class="t" style="left:705px;top:23px;color:#ff00ff;">ZBGS324: 16.27</div>
<div class="t" style="left:1091px;top:556px;color:#ff3232;">11.00</div>
<div class="t" style="left:1091px;top:509px;color:#ff3232;">12.00</div>
<div class="t" style="left:1091px;top:462px;color:#ff3232;">13.00</div>
<div class="t" style="left:1091px;top:415px;color:#ff3232;">14.00</div>
<div class="t" style="left:1091px;top:368px;color:#ff3232;">15.00</div>
<div class="t" style="left:1091px;top:321px;color:#ff3232;">16.00</div>
<div class="t" style="left:1091px;top:274px;color:#ff3232;">17.00</div>
<div class="t" style="left:1091px;top:227px;color:#ff3232;">18.00</div>
<div class="t" style="left:1091px;top:180px;color:#ff3232;">19.00</div>
<div class="t" style="left:1091px;top:133px;color:#ff3232;">20.00</div>
<div class="t" style="left:1091px;top:87px;color:#ff3232;">21.00</div>
<div class="t" style="left:1091px;top:40px;color:#ff3232;">22.00</div>
<div style="position:absolute;left:1076px;top:500px;width:50px;height:15px;background:#000080"></div>
<div class="t" style="left:1078px;top:501px;color:#ffffff;">11.95</div>
<div class="t" style="left:5px;top:632px;color:#ff3232;">2025年</div>
<div class="t" style="left:151px;top:632px;color:#ff3232;">5</div>
<div class="t" style="left:305px;top:632px;color:#ff3232;">6</div>
<div class="t" style="left:466px;top:632px;color:#ff3232;">7</div>
<div class="t" style="left:749px;top:632px;color:#ff3232;">9</div>
<div class="t" style="left:927px;top:632px;color:#ff3232;">10</div>
<div class="t" style="left:577px;top:632px;color:#e0e0e0;">2025/08/01/五</div>
<div class="t" style="left:-2px;top:616px;width:12px;height:13px;background:#008000;color:#fff;overflow:hidden">跌</div>
<div class="t" style="left:490px;top:616px;width:13px;height:13px;background:#008080;color:#fff;overflow:hidden">停</div>
<div class="t" style="left:684px;top:616px;width:13px;height:13px;background:#800000;color:#fff;overflow:hidden">涨</div>
<div class="t" style="left:716px;top:616px;width:9px;height:13px;background:#008080;color:#fff;overflow:hidden">解</div>
<div class="t" style="left:724px;top:616px;width:13px;height:13px;background:#004080;color:#fff;overflow:hidden">财</div>
<div class="t b" style="left:52px;top:353px;color:#ffff00;">暴涨</div>
<div class="t b" style="left:44px;top:387px;color:#ff0000;">加仓</div>
<div class="t b" style="left:44px;top:409px;color:#ffff00;">买入</div>
<div class="t b" style="left:52px;top:418px;color:#ffffff;">A级起暴</div>
<div class="t b" style="left:53px;top:461px;color:#ffffff;">C级起暴</div>
<div class="t b" style="left:51px;top:490px;color:#ffff00;">强势拉升</div>
<div class="t" style="left:34px;top:485px;color:#c0c0c0;">12.59</div>
<div class="t b" style="left:141px;top:349px;color:#ff0000;">加仓</div>
<div class="t b" style="left:425px;top:414px;color:#ff0000;">加仓</div>
<div class="t b" style="left:692px;top:391px;color:#ff0000;">后市有牛</div>
<div class="t b" style="left:690px;top:398px;color:#ffff00;">暴涨</div>
<div class="t b" style="left:691px;top:407px;color:#ff0000;">加仓</div>
<div class="t b" style="left:690px;top:460px;color:#ff00ff;">涨停平台</div>
<div class="t b" style="left:691px;top:460px;color:#ffffff;">A级起暴</div>
<div class="t b" style="left:690px;top:528px;color:#ffff00;">强势拉升</div>
<div class="t b" style="left:909px;top:452px;color:#ff0000;">加仓</div>
<div class="t b" style="left:909px;top:471px;color:#ffff00;">买入</div>
<div class="t" style="left:993px;top:169px;color:#c0c0c0;">19.30</div>
<div class="t" style="left:487px;top:285px;color:#ff00ff;-webkit-text-stroke:0.15px #ff00ff">量</div>
<div class="t" style="left:504px;top:281px;color:#ff00ff;-webkit-text-stroke:0.15px #ff00ff">量</div>
<div class="t" style="left:544px;top:316px;color:#ff00ff;-webkit-text-stroke:0.15px #ff00ff">量</div>
<div class="t" style="left:690px;top:325px;color:#ff00ff;-webkit-text-stroke:0.15px #ff00ff">量</div>
<div class="t" style="left:762px;top:305px;color:#ff00ff;-webkit-text-stroke:0.15px #ff00ff">量</div>
<div class="t" style="left:908px;top:375px;color:#ff00ff;-webkit-text-stroke:0.15px #ff00ff">量</div>
<div class="t" style="left:924px;top:293px;color:#ff00ff;-webkit-text-stroke:0.15px #ff00ff">量</div>
<div style="position:absolute;left:978px;top:600px;width:152px;height:50px;background:#000"></div>
<div class="t" style="left:998px;top:607px;font-family:'Liberation Serif','Noto Serif CJK SC',serif;font-weight:bold;font-size:20px;letter-spacing:0.4px;line-height:24px;color:#fff;text-shadow:1px 1px 0 #777">乐淘公式网</div>
<div class="t" style="left:1001px;top:631px;font-family:'Liberation Serif',serif;font-weight:bold;font-size:15px;line-height:15px;color:#fff;text-shadow:1px 1px 0 #777">www.60lt.com</div>
</body></html>
